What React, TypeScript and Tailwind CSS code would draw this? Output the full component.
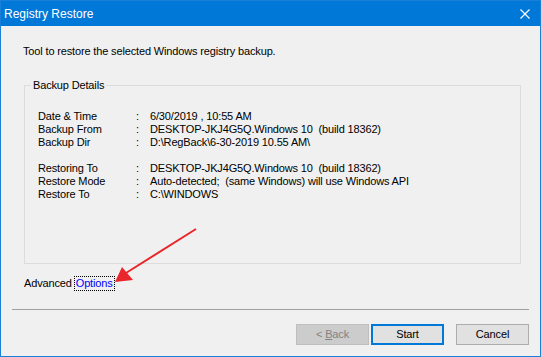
const details = [
  { label: "Date & Time", value: "6/30/2019 , 10:55 AM" },
  { label: "Backup From", value: "DESKTOP-JKJ4G5Q.Windows 10  (build 18362)" },
  { label: "Backup Dir", value: "D:\\RegBack\\6-30-2019 10.55 AM\\" },
];

const restore = [
  { label: "Restoring To", value: "DESKTOP-JKJ4G5Q.Windows 10  (build 18362)" },
  { label: "Restore Mode", value: "Auto-detected;  (same Windows) will use Windows API" },
  { label: "Restore To", value: "C:\\WINDOWS" },
];

const Row = ({ label, value }: { label: string; value: string }) => (
  <div className="grid grid-cols-[98px_14px_1fr] h-[13px] leading-[13px]">
    <span>{label}</span>
    <span>:</span>
    <span className="whitespace-pre">{value}</span>
  </div>
);

export default function App() {
  return (
    <div
      className="relative w-[541px] h-[357px] border border-[#1a7fd6] bg-[#f0f0f0] flex flex-col text-[11px] tracking-[-0.15px] text-black"
      style={{ fontFamily: '"Liberation Sans", Arial, sans-serif' }}
    >
      <div className="h-[25px] bg-[#0078d7] flex items-center justify-between pl-[3px] pr-[10px] text-white text-[12px] tracking-normal">
        <span>Registry Restore</span>
        <svg width="10" height="10" viewBox="0 0 10 10">
          <path d="M0.5 0.5 L9.5 9.5 M9.5 0.5 L0.5 9.5" stroke="#fff" strokeWidth="1.2" />
        </svg>
      </div>

      <div className="flex flex-col px-[22px]">
        <p className="mt-[19px] leading-[13px]">
          Tool to restore the selected Windows registry backup.
        </p>

        <fieldset className="mt-[21px] ml-px w-[497px] h-[185px] border border-[#dcdcdc] pl-[13px] pt-[18px]">
          <legend className="-ml-[7px] px-[2px] leading-[13px]">Backup Details</legend>
          <div className="flex flex-col">
            {details.map((d) => (
              <Row key={d.label} {...d} />
            ))}
          </div>
          <div className="flex flex-col mt-[13px]">
            {restore.map((d) => (
              <Row key={d.label} {...d} />
            ))}
          </div>
        </fieldset>

        <div className="mt-[13px] ml-px leading-[13px] flex items-center">
          <span>Advanced</span>
          <span className="ml-[3px] text-[#0000ff] outline outline-1 outline-dotted outline-black outline-offset-0 px-px">
            Options
          </span>
        </div>
      </div>

      <div className="mt-[19px] mx-[11px] h-px bg-[#a0a0a0]" />

      <div className="mt-[14px] flex justify-end pr-[11px] text-[11px]">
        <button className="w-[73px] h-[21px] bg-[#cccccc] border border-[#bfbfbf] text-[#838383]">
          &lt; <span className="underline">B</span>ack
        </button>
        <button className="ml-[2px] w-[73px] h-[21px] bg-[#e1e1e1] border-2 border-[#0078d7]">
          Start
        </button>
        <button className="ml-[12px] w-[73px] h-[21px] bg-[#e1e1e1] border border-[#adadad]">
          Cancel
        </button>
      </div>

      <svg
        className="absolute left-0 top-0 pointer-events-none"
        width="541"
        height="357"
        viewBox="0 0 541 357"
      >
        <line x1="195" y1="228" x2="125" y2="272" stroke="#e8262b" strokeWidth="2" />
        <polygon points="114,281 121,266 132,279" fill="#e8262b" />
      </svg>
    </div>
  );
}
